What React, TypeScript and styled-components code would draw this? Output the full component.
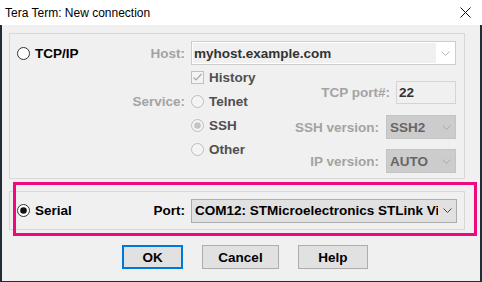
import { FC, ReactNode } from 'react';
import styled, { createGlobalStyle } from 'styled-components';

const COLOR = {
  FRAME: '#222c35',
  FACE: '#f0f0f0',
  GROUP: '#d8d8d8',
  DISABLED: '#a3a3a3',
  DIM_TEXT: '#4f4f4f',
  PINK: '#f2087e',
  BUTTON: '#e1e1e1',
  BUTTON_BORDER: '#adadad',
  FOCUS: '#0078d7',
};

const GlobalStyle = createGlobalStyle`
  * { box-sizing: border-box; }
  html, body {
    margin: 0;
    padding: 0;
    width: 482px;
    height: 282px;
    overflow: hidden;
    background: ${COLOR.FRAME};
  }
  body {
    font-family: 'Liberation Sans', Arial, sans-serif;
  }
`;

const Chevron: FC<{ color: string }> = ({ color }) => (
  <svg width="9" height="5" viewBox="0 0 9 5">
    <polyline points="0.5,0.5 4.5,4.5 8.5,0.5" fill="none" stroke={color} strokeWidth="1" />
  </svg>
);

const Radio: FC<{ checked?: boolean; disabled?: boolean }> = ({ checked, disabled }) => {
  const ring = disabled ? '#bcbcbc' : '#333333';
  const fill = disabled ? '#f4f4f4' : '#ffffff';
  const dot = disabled ? '#c4c4c4' : '#111111';
  return (
    <svg width="13" height="13" viewBox="0 0 13 13">
      <circle cx="6.5" cy="6.5" r="6" fill={fill} stroke={ring} strokeWidth="1" />
      {checked && <circle cx="6.5" cy="6.5" r="3.3" fill={dot} />}
    </svg>
  );
};

const CheckBox: FC = () => (
  <svg width="13" height="13" viewBox="0 0 13 13">
    <rect x="0.5" y="0.5" width="12" height="12" fill="#f4f4f4" stroke="#c0c0c0" />
    <polyline points="2.5,6.5 5,9 10.5,3" fill="none" stroke="#a8a8a8" strokeWidth="1.2" />
  </svg>
);

const Window = styled.div`
  width: 482px;
  height: 282px;
  display: flex;
  flex-direction: column;
`;

const TitleBar = styled.div`
  height: 25px;
  flex: none;
  background: #ffffff;
  display: flex;
  align-items: center;
  padding: 0 11px 0 5px;
  font-size: 12px;
  color: #000;
  span {
    flex: 1;
  }
`;

const Body = styled.div`
  flex: 1;
  background: ${COLOR.FACE};
  border-left: 2px solid ${COLOR.FRAME};
  border-right: 2px solid ${COLOR.FRAME};
  border-bottom: 1px solid ${COLOR.FRAME};
  padding: 8px 0 0 7px;
  font-size: 13.5px;
  font-weight: 700;
`;

const GroupBox = styled.div<{ $height: number }>`
  width: 456px;
  height: ${(p) => p.$height}px;
  border: 1px solid ${COLOR.GROUP};
  padding: 7px 0 0 7px;
  display: grid;
  grid-template-columns: 168px 266px;
  grid-template-rows: 24px auto;
  column-gap: 6px;
  align-content: start;
`;

const SerialArea = styled.div`
  position: relative;
  margin-top: 12px;

  ${GroupBox} {
    padding-top: 0;
    grid-template-rows: 37px;
    align-items: center;
  }
`;

const Highlight = styled.div`
  position: absolute;
  left: 4px;
  top: -9px;
  width: 464px;
  height: 54px;
  border: 3px solid ${COLOR.PINK};
  pointer-events: none;
`;

const LabelCell = styled.div`
  display: flex;
  align-items: center;
  justify-content: space-between;
`;

const Option = styled.label<{ $dim?: boolean }>`
  display: flex;
  align-items: center;
  gap: 5px;
  height: 24px;
  color: ${(p) => (p.$dim ? COLOR.DIM_TEXT : '#000')};
  svg {
    flex: none;
  }
`;

const Label = styled.span<{ $disabled?: boolean }>`
  color: ${(p) => (p.$disabled ? COLOR.DISABLED : '#000')};
  white-space: nowrap;
`;

const ServiceCell = styled.div`
  padding-top: 24px;
  display: flex;
  justify-content: flex-end;
  align-items: center;
  height: 48px;
`;

const Lower = styled.div`
  display: flex;
  justify-content: space-between;
`;

const OptionColumn = styled.div`
  display: flex;
  flex-direction: column;
`;

const FieldColumn = styled.div`
  display: flex;
  flex-direction: column;
  padding-top: 16px;
  margin-right: 1px;
`;

const FieldRow = styled.div<{ $gap: number; $top: number }>`
  display: flex;
  justify-content: flex-end;
  align-items: center;
  gap: ${(p) => p.$gap}px;
  margin-top: ${(p) => p.$top}px;
`;

const HostCombo = styled.div`
  width: 265px;
  height: 24px;
  border: 1px solid #cdcdcd;
  background: #ffffff;
  display: flex;
  padding: 1px;
`;

const EditArea = styled.div`
  flex: 1;
  background: ${COLOR.FACE};
  color: #333;
  padding-left: 1px;
  display: flex;
  align-items: center;
`;

const ArrowArea = styled.div`
  width: 18px;
  flex: none;
  display: flex;
  align-items: center;
  justify-content: center;
`;

const PortField = styled.div`
  width: 60px;
  height: 23px;
  border: 1px solid #d4d4d4;
  background: ${COLOR.FACE};
  color: #333;
  padding-left: 2px;
  display: flex;
  align-items: center;
`;

const Combo = styled.div<{ $width: number; $disabled?: boolean }>`
  width: ${(p) => p.$width}px;
  height: 24px;
  border: 1px solid ${(p) => (p.$disabled ? '#c4c4c4' : COLOR.BUTTON_BORDER)};
  background: ${(p) => (p.$disabled ? '#cccccc' : COLOR.BUTTON)};
  color: ${(p) => (p.$disabled ? '#666' : '#000')};
  display: flex;
  align-items: center;
  padding-left: 3px;

  > span {
    flex: 1;
    overflow: hidden;
    white-space: nowrap;
  }
`;

const ButtonRow = styled.div`
  display: flex;
  gap: 19px;
  margin: 15px 0 0 113px;
`;

const Button = styled.div<{ $width: number; $default?: boolean }>`
  width: ${(p) => p.$width}px;
  height: 24px;
  background: ${COLOR.BUTTON};
  border: ${(p) => (p.$default ? `2px solid ${COLOR.FOCUS}` : `1px solid ${COLOR.BUTTON_BORDER}`)};
  display: flex;
  align-items: center;
  justify-content: center;
  color: #000;
`;

const VersionRow: FC<{ label: string; value: string; top: number }> = ({ label, value, top }) => (
  <FieldRow $gap={7} $top={top}>
    <Label $disabled>{label}</Label>
    <Combo $width={70} $disabled>
      <span>{value}</span>
      <ArrowArea>
        <Chevron color="#a8a8a8" />
      </ArrowArea>
    </Combo>
  </FieldRow>
);

const Choice: FC<{ children: ReactNode; checked?: boolean }> = ({ children, checked }) => (
  <Option $dim>
    <Radio disabled checked={checked} />
    {children}
  </Option>
);

const App: FC = () => (
  <>
    <GlobalStyle />
    <Window>
      <TitleBar>
        <span>Tera Term: New connection</span>
        <svg width="11" height="11" viewBox="0 0 11 11">
          <path d="M0.5 0.5 L10.5 10.5 M10.5 0.5 L0.5 10.5" stroke="#111" strokeWidth="1" />
        </svg>
      </TitleBar>
      <Body>
        <GroupBox $height={146}>
          <LabelCell>
            <Option>
              <Radio />
              TCP/IP
            </Option>
            <Label $disabled>Host:</Label>
          </LabelCell>
          <HostCombo>
            <EditArea>myhost.example.com</EditArea>
            <ArrowArea>
              <Chevron color="#b4b4b4" />
            </ArrowArea>
          </HostCombo>
          <ServiceCell>
            <Label $disabled>Service:</Label>
          </ServiceCell>
          <Lower>
            <OptionColumn>
              <Option $dim>
                <CheckBox />
                History
              </Option>
              <Choice>Telnet</Choice>
              <Choice checked>SSH</Choice>
              <Choice>Other</Choice>
            </OptionColumn>
            <FieldColumn>
              <FieldRow $gap={6} $top={0}>
                <Label $disabled>TCP port#:</Label>
                <PortField>22</PortField>
              </FieldRow>
              <VersionRow label="SSH version:" value="SSH2" top={11} />
              <VersionRow label="IP version:" value="AUTO" top={10} />
            </FieldColumn>
          </Lower>
        </GroupBox>

        <SerialArea>
          <GroupBox $height={39}>
            <LabelCell>
              <Option>
                <Radio checked />
                Serial
              </Option>
              <Label>Port:</Label>
            </LabelCell>
            <Combo $width={266}>
              <span>COM12: STMicroelectronics STLink Vi</span>
              <ArrowArea>
                <Chevron color="#444" />
              </ArrowArea>
            </Combo>
          </GroupBox>
          <Highlight />
        </SerialArea>

        <ButtonRow>
          <Button $width={61} $default>
            OK
          </Button>
          <Button $width={77}>Cancel</Button>
          <Button $width={70}>Help</Button>
        </ButtonRow>
      </Body>
    </Window>
  </>
);

export default App;
